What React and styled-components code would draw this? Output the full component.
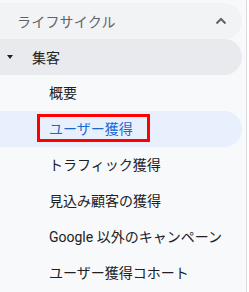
import styled, { createGlobalStyle } from "styled-components";

const GlobalStyle = createGlobalStyle`
    html, body {
        margin: 0;
        padding: 0;
        background: #ffffff;
    }
    body {
        font-family: Roboto, "Noto Sans CJK JP", sans-serif;
        -webkit-font-smoothing: antialiased;
    }
`;

const items = [
    { label: "概要" },
    { label: "ユーザー獲得", active: true },
    { label: "トラフィック獲得" },
    { label: "見込み顧客の獲得" },
    { label: "Google 以外のキャンペーン" },
    { label: "ユーザー獲得コホート" },
];

export default function App() {
    return (
        <>
            <GlobalStyle />
            <Nav>
                <SectionHeader>
                    <HeaderTitle>ライフサイクル</HeaderTitle>
                    <svg width="12" height="8" viewBox="0 0 12 8">
                        <path d="M1.5 6.5 L6 2 L10.5 6.5" fill="none" stroke="#5f6368" strokeWidth="2" />
                    </svg>
                </SectionHeader>
                <GroupRow>
                    <Caret />
                    <GroupTitle>集客</GroupTitle>
                </GroupRow>
                <List>
                    {items.map((item) => (
                        <Item key={item.label} $active={item.active}>
                            <Label $marked={item.active}>{item.label}</Label>
                        </Item>
                    ))}
                </List>
            </Nav>
        </>
    );
}

const Nav = styled.nav`
    width: 242px;
    height: 292px;
    padding: 3px 4px 0 0;
    box-sizing: border-box;
    width: 247px;
    background: #f8f9fa;
    border-right: 1px solid #dadce0;
    overflow: hidden;
`;

const SectionHeader = styled.div`
    height: 36px;
    display: flex;
    align-items: center;
    justify-content: space-between;
    padding: 0 15px 0 17px;
    background: #f1f3f4;
    border-radius: 0 18px 18px 0;
`;

const HeaderTitle = styled.span`
    font-size: 14px;
    color: #5f6368;
    letter-spacing: 0.2px;
`;

const GroupRow = styled.div`
    height: 36px;
    display: flex;
    align-items: center;
    padding-left: 7px;
    background: #e8eaed;
    border-radius: 0 18px 18px 0;
`;

const Caret = styled.span`
    width: 0;
    height: 0;
    border-left: 3.5px solid transparent;
    border-right: 3.5px solid transparent;
    border-top: 4px solid #202124;
    margin-right: 19px;
`;

const GroupTitle = styled.span`
    font-size: 14px;
    color: #202124;
`;

const List = styled.ul`
    list-style: none;
    margin: 0;
    padding: 0;
`;

const Item = styled.li`
    height: 36px;
    display: flex;
    align-items: center;
    padding-left: 49px;
    border-radius: 0 18px 18px 0;
    background: ${(p) => (p.$active ? "#e8f0fe" : "transparent")};
    color: ${(p) => (p.$active ? "#1967d2" : "#202124")};
    font-size: 14px;
`;

const Label = styled.span`
    position: relative;
    line-height: 20px;
    white-space: nowrap;

    ${(p) =>
        p.$marked &&
        `
        &::after {
            content: "";
            position: absolute;
            left: -12px;
            right: -17px;
            top: -5px;
            bottom: -3px;
            border: 3px solid #ff0000;
        }
    `}
`;
